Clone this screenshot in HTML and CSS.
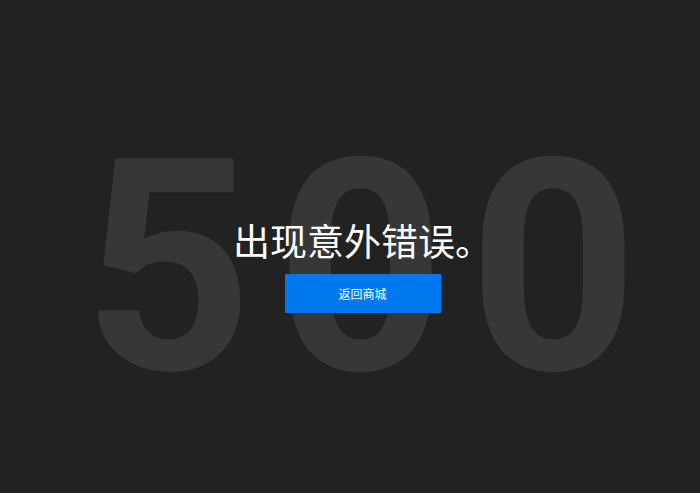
FILE: index.html
```html
<!DOCTYPE html>
<html lang="zh-CN">
<head>
<meta charset="utf-8">
<title>500</title>
<link rel="stylesheet" href="styles.css">
</head>
<body>
<main class="stage">
  <div class="big">500</div>
  <div class="content">
    <h1 class="title">出现意外错误。</h1>
    <a class="btn" href="#">返回商城</a>
  </div>
</main>
</body>
</html>
```
FILE: styles.css
```css
html, body {
  margin: 0;
  padding: 0;
  background: #222222;
}
.stage {
  display: grid;
  justify-items: center;
  align-items: start;
  height: 493px;
  padding-left: 25px;
  box-sizing: border-box;
  overflow: hidden;
}
.big {
  grid-area: 1 / 1;
  font-family: Roboto, "Liberation Sans", sans-serif;
  font-weight: 700;
  font-size: 296px;
  line-height: 1;
  letter-spacing: 23px;
  margin-right: -19px;
  color: #373737;
  margin-top: 120px;
}
.content {
  grid-area: 1 / 1;
  display: flex;
  flex-direction: column;
  align-items: center;
  padding-top: 220px;
}
.title {
  margin: 0;
  font-family: "Noto Sans CJK SC", sans-serif;
  font-weight: 400;
  font-size: 37px;
  line-height: 40px;
  color: #ffffff;
}
.btn {
  display: flex;
  align-items: center;
  justify-content: center;
  width: 156px;
  height: 39px;
  margin-top: 14px;
  background: #0078f0;
  color: #ffffff;
  font-family: "Noto Sans CJK SC", sans-serif;
  font-size: 12px;
  text-decoration: none;
}
```
